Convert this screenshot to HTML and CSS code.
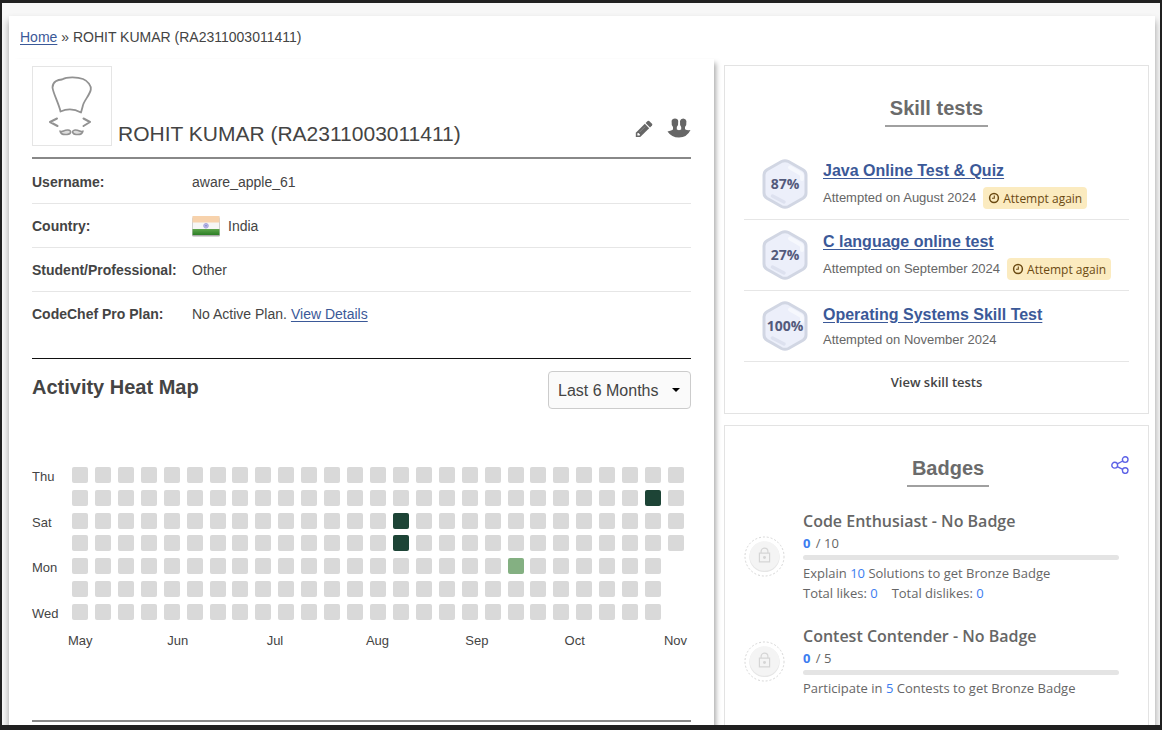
FILE: index.html
```html
<!DOCTYPE html>
<html lang="en">
<head>
<meta charset="utf-8">
<meta name="viewport" content="width=device-width, initial-scale=1">
<title>ROHIT KUMAR (RA2311003011411)</title>
<link rel="stylesheet" href="styles.css">
</head>
<body>
<svg width="0" height="0" class="defs" aria-hidden="true">
  <symbol id="hex" viewBox="0 0 46 50">
    <path d="M19.500 2.500Q23 .8 26.500 2.500L41 10.700Q44 12.500 44 16V34Q44 37.500 41 39.300L26.500 47.500Q23 49.200 19.500 47.500L5 39.300Q2 37.500 2 34V16Q2 12.500 5 10.700Z" fill="#eceffa" stroke="#d1d6e3" stroke-width="3"/>
    <path d="M28 8.500L38.500 14.500Q40 15.500 40 17V20" fill="none" stroke="#f6f8fd" stroke-width="4" stroke-linecap="round"/>
    <path d="M10.500 37L22 43" stroke="#dde1ef" stroke-width="3.500" stroke-linecap="round"/>
  </symbol>
  <symbol id="clock" viewBox="0 0 12 12">
    <circle cx="6" cy="6" r="4.400" fill="none" stroke="currentColor" stroke-width="1.500"/>
    <path d="M6.300 3.400V6.300H4" fill="none" stroke="currentColor" stroke-width="1.100"/>
  </symbol>
  <symbol id="lock" viewBox="0 0 42 42">
    <circle cx="21" cy="21" r="20" fill="none" stroke="#d4d4d4" stroke-width="1" stroke-dasharray="2 2"/>
    <circle cx="21" cy="21.500" r="15.500" fill="#e6e6e6"/>
    <circle cx="21" cy="20.500" r="15.200" fill="#f4f4f4"/>
    <path d="M17.500 17.500V16A3.500 3.500 0 0 1 24.500 16V17.500M15.800 17.500H26.200V26.500H15.800Z" fill="none" stroke="#d5d5d5" stroke-width="1.200"/>
    <circle cx="21" cy="22" r="1.500" fill="#d5d5d5"/>
  </symbol>
</svg>
<div class="viewport">
  <div class="page">
    <nav class="breadcrumb"><a href="#">Home</a> » ROHIT KUMAR (RA2311003011411)</nav>
    <div class="columns">
      <main class="profile">
        <header class="profile-head">
          <svg class="avatar" viewBox="0 0 78 78" role="img" aria-label="Chef avatar">
            <g fill="none" stroke="#929292" stroke-width="1.800" stroke-linecap="round" stroke-linejoin="round">
              <path d="M27.500 44.500C26 37 20 26 19.500 20.500C19.500 14.500 25 12.500 29 12.500C34 9.300 45 10 50 12C55 14 58.500 19 57.800 22.500C57 28 50.500 34 49.800 39L48 45.500C41 41.500 34 41.500 27.500 44.500Z"/>
              <path d="M24 51.500L17 55L24.500 59M50.500 51.500L57 55L50.500 59" stroke-width="2"/>
              <path d="M27 64C29 66 31 62.500 35 63C39 63.500 38.500 67 34 67.500C30 68 27.500 66.500 27 64ZM50 64C48 66 46 62.500 42 63C38.500 63.500 39 67 43 67.500C47 68 49.500 66.500 50 64Z" stroke-width="1.500" fill="#ddd"/>
            </g>
          </svg>
          <h1>ROHIT KUMAR (RA2311003011411)</h1>
          <a class="action" href="#" aria-label="Edit profile"><svg width="18" height="18" viewBox="0 0 18 18"><path d="M.8 17V12.700L9.800 3.800L14.200 8.200L5.200 17Z" fill="#666"/><path d="M10.600 3L12.600 1Q13.400.3 14.200 1L17 3.800Q17.700 4.600 17 5.400L15 7.400Z" fill="#666"/><path d="M2.400 13.300V15.600H4.600L5 14.500L3.500 13Z" fill="#fff"/><path d="M4.700 12L10 6.700" stroke="#999" stroke-width=".7"/></svg></a>
          <a class="action" href="#" aria-label="Teams"><svg width="24" height="20" viewBox="0 0 24 20"><path d="M.5 13.500Q5 12.500 6 11.500V9Q4.200 7 4.600 3Q5 .5 8 .5T11.200 3Q11.600 7 9.800 9V11.500L12 12.300L14.200 11.500V9Q12.600 7 13 3Q13.500.5 16.200.5T19.400 3Q19.800 7 18 9V11.200Q20 12.500 23.500 12Q20 19.500 12 19.500Q4.500 19.500.5 13.500Z" fill="#666"/></svg></a>
        </header>
        <dl class="details">
          <div class="detail"><dt>Username:</dt><dd>aware_apple_61</dd></div>
          <div class="detail"><dt>Country:</dt><dd><svg class="flag" width="28" height="22" viewBox="0 0 28 22" aria-hidden="true"><defs><linearGradient id="g" x2="0" y2="1"><stop stop-color="#5da64c"/><stop offset="1" stop-color="#2c7e25"/></linearGradient></defs><rect x="0" y="2" width="28" height="19.500" rx="1.500" fill="#aaa"/><rect x=".5" y="1" width="27" height="19" fill="#f6f6f6"/><path d="M.5 1H27.500V7.500H.5Z" fill="#f7d2ac"/><path d="M.5 14H27.500V20H.5Z" fill="url(#g)"/><circle cx="14" cy="10.800" r="2.300" fill="#b9b9e5" stroke="#a5a5dc" stroke-width="1"/><circle cx="14" cy="10.800" r=".8" fill="#7979c8"/></svg>India</dd></div>
          <div class="detail"><dt>Student/Professional:</dt><dd>Other</dd></div>
          <div class="detail"><dt>CodeChef Pro Plan:</dt><dd>No Active Plan. <a href="#">View Details</a></dd></div>
        </dl>
        <section class="activity">
          <div class="activity-head">
            <h2><label for="range">Activity Heat Map</label></h2>
            <div class="select-wrap">
              <select id="range"><option>Last 6 Months</option><option>Last 12 Months</option></select>
            </div>
          </div>
          <div class="heatmap">
            <div class="days"><span>Thu</span><span></span><span>Sat</span><span></span><span>Mon</span><span></span><span>Wed</span></div>
            <div class="cells" id="cells"></div>
            <div class="months"><span>May</span><span>Jun</span><span>Jul</span><span>Aug</span><span>Sep</span><span>Oct</span><span>Nov</span></div>
          </div>
        </section>
      </main>
      <aside class="side">
        <section class="panel skills">
          <h2 class="panel-title">Skill tests</h2>
          <ul class="tests">
            <li class="test"><div class="score"><svg><use href="#hex"/></svg><span>87%</span></div><div><a class="test-name" href="#">Java Online Test &amp; Quiz</a><div class="test-meta">Attempted on August 2024 <button type="button" class="again"><svg><use href="#clock"/></svg>Attempt again</button></div></div></li>
            <li class="test"><div class="score"><svg><use href="#hex"/></svg><span>27%</span></div><div><a class="test-name" href="#">C language online test</a><div class="test-meta">Attempted on September 2024 <button type="button" class="again"><svg><use href="#clock"/></svg>Attempt again</button></div></div></li>
            <li class="test"><div class="score"><svg><use href="#hex"/></svg><span>100%</span></div><div><a class="test-name" href="#">Operating Systems Skill Test</a><div class="test-meta plain">Attempted on November 2024</div></div></li>
          </ul>
          <a class="view-tests" href="#">View skill tests</a>
        </section>
        <section class="panel badges">
          <div class="badges-head">
            <h2 class="panel-title">Badges</h2>
            <button type="button" class="share" aria-label="Share badges"><svg width="18" height="18" viewBox="0 0 18 18"><g fill="none" stroke="#5d62e6" stroke-width="1.400"><circle cx="3.700" cy="9.200" r="2.900"/><circle cx="14.200" cy="3.600" r="2.800"/><circle cx="14.200" cy="14.600" r="2.800"/><path d="M6.300 7.800L11.700 5M6.300 10.600L11.700 13.300"/></g></svg></button>
          </div>
          <article class="badge"><svg class="lock" aria-hidden="true"><use href="#lock"/></svg>
            <div class="badge-body"><h3>Code Enthusiast - No Badge</h3><p class="progress-text"><b>0</b> / 10</p><div class="bar"></div><p>Explain <em>10</em> Solutions to get Bronze Badge</p><p class="totals"><span>Total likes: <em>0</em></span><span>Total dislikes: <em>0</em></span></p></div>
          </article>
          <article class="badge"><svg class="lock" aria-hidden="true"><use href="#lock"/></svg>
            <div class="badge-body"><h3>Contest Contender - No Badge</h3><p class="progress-text"><b>0</b> / 5</p><div class="bar"></div><p>Participate in <em>5</em> Contests to get Bronze Badge</p></div>
          </article>
        </section>
      </aside>
    </div>
  </div>
</div>
<script src="heatmap.js"></script>
</body>
</html>
```
FILE: styles.css
```css
* { box-sizing: border-box; }
body {
  margin: 0;
  height: 100vh;
  padding: 3px 2px 5px;
  background: #202020;
  color: #444;
  font: 13px/20px "Liberation Sans", Arial, sans-serif;
}
h1, h2, h3, p, ul, dl, dd { margin: 0; padding: 0; }
button { border: 0; padding: 0; background: none; cursor: pointer; }
a { color: #3b5998; text-underline-offset: 2px; }
svg { display: block; flex: none; }
.defs { position: absolute; }
.viewport {
  height: 100%;
  overflow: hidden;
  background: #f7f7f7;
  padding: 13px 5px 0 7px;
}
.page {
  min-height: 100%;
  background: #fff;
  padding: 0 6px;
  box-shadow: 0 5px 7px #999;
}
.breadcrumb {
  padding: 11px 5px 12px;
  font-size: 14px;
}
.columns { display: flex; gap: 10px; }
.profile {
  flex: 1;
  padding: 7px 23px 0 17px;
  height: 800px;
  box-shadow: 2px 4px 5px #aaa;
  clip-path: inset(-1px -8px 0 0);
}
.profile-head {
  display: flex;
  align-items: flex-end;
  gap: 14px;
  padding-bottom: 11px;
  border-bottom: 2px solid #888;
}
.avatar { width: 80px; height: 80px; border: 1px solid #e5e5e5; margin-right: -8px; }
.profile-head h1 { flex: 1; font-size: 21px; font-weight: 400; line-height: 24px; }
.action { padding-bottom: 8px; }
.details { padding-top: 1px; font-size: 14px; }
.detail {
  display: flex;
  align-items: center;
  height: 44px;
  border-bottom: 1px solid #e6e6e6;
}
.detail:last-child { border: 0; }
.detail dt { width: 160px; font-weight: 700; }
.detail dd { display: flex; align-items: center; gap: 4px; }
.flag { margin-right: 4px; }
.activity {
  height: 364px;
  margin-top: 22px;
  padding-top: 12px;
  border-top: 1px solid #111;
  border-bottom: 2px solid #888;
}
.activity-head { display: flex; justify-content: space-between; }
.activity-head h2 { font-size: 20px; line-height: 32px; }
.select-wrap { position: relative; }
.select-wrap select {
  appearance: none;
  height: 38px;
  width: 143px;
  padding: 0 9px;
  border: 1px solid #ccc;
  border-radius: 4px;
  background: #fafafa;
  color: #444;
  font: 16px "Liberation Sans", Arial, sans-serif;
}
.select-wrap::after {
  content: "";
  position: absolute;
  right: 11px;
  top: 17px;
  border: 4px solid transparent;
  border-top: 4px solid #000;
  border-bottom: 0;
  pointer-events: none;
}
.heatmap {
  display: grid;
  grid-template-columns: 40px 1fr;
  margin: 58px 7px 0 0;
}
.days, .cells {
  display: grid;
  grid-template-rows: repeat(7, 16px);
  align-content: space-between;
  height: 153px;
}
.days { line-height: 20px; }
.cells {
  grid-template-columns: repeat(27, 16px);
  justify-content: space-between;
}
.cell { background: #d9d9d9; border-radius: 2px; }
.cell.high { background: #1d4436; }
.cell.mid { background: #84b082; }
.cell.none { visibility: hidden; }
.months {
  grid-column: 1 / -1;
  display: grid;
  grid-template-columns: repeat(6, 1fr) auto;
  margin: 11px -3px 0 36px;
}
.side { width: 425px; padding-top: 6px; }
.panel { border: 1px solid #e3e3e3; padding: 0 19px; }
.skills { height: 349px; margin-bottom: 11px; padding-top: 30px; }
.panel-title {
  width: max-content;
  margin: 0 auto;
  padding: 0 5px 5px;
  border-bottom: 2px solid #a0a0a0;
  color: #6b6b6b;
  font-size: 20px;
  line-height: 24px;
}
.tests { list-style: none; margin-top: 22px; }
.test {
  display: flex;
  align-items: center;
  gap: 15px;
  height: 71px;
  padding-left: 18px;
  border-bottom: 1px solid #e6e6e6;
}
.score { position: relative; width: 46px; height: 50px; }
.score svg { width: 46px; height: 50px; }
.score span {
  position: absolute;
  inset: 0;
  display: grid;
  place-items: center;
  color: #535a7c;
  font: 700 14px/20px "Open Sans", sans-serif;
  padding-bottom: 1px;
}
.test-name { display: block; font-size: 16px; font-weight: 700; line-height: 24px; }
.test-meta { display: flex; align-items: center; gap: 7px; margin-top: 4px; color: #666; }
.test-meta.plain { margin-top: 3px; }
.again {
  display: flex;
  align-items: center;
  gap: 3px;
  height: 22px;
  padding: 0 5px;
  border-radius: 4px;
  background: #fbebc0;
  color: #6b4a12;
  font: 12px "Open Sans", sans-serif;
}
.again svg { width: 12px; height: 12px; }
.view-tests {
  display: block;
  margin-top: 10px;
  color: #444;
  text-align: center;
  text-decoration: none;
  font: 600 13px/20px "Open Sans", sans-serif;
}
.badges { height: 420px; padding-top: 30px; color: #666; font-family: "Open Sans", sans-serif; }
.badges-head { display: flex; align-items: flex-start; padding-left: 41px; }
.badges-head .panel-title { font-family: "Liberation Sans", Arial, sans-serif; }
.badge { display: flex; align-items: center; gap: 18px; margin-top: 21px; }
.badges-head + .badge { margin-top: 22px; }
.lock { width: 41px; height: 41px; }
.badge-body { flex: 1; padding-right: 10px; }
.badge h3 { font-size: 16px; font-weight: 600; line-height: 24px; }
.badge b, .badge em { color: #3c7df0; font-style: normal; }
.progress-text b { margin-right: 2px; }
.bar { height: 5px; margin: 2px 0 3px; border-radius: 3px; background: #e4e4e4; }
.totals { display: flex; gap: 14px; }
```
FILE: heatmap.js
```js
const WEEKS = 27;
const levels = { "1-25": "high", "2-14": "high", "3-14": "high", "4-19": "mid" };
const cells = document.getElementById("cells");
for (let day = 0; day < 7; day++) {
  for (let week = 0; week < WEEKS; week++) {
    const cell = document.createElement("span");
    const future = week === WEEKS - 1 && day > 3;
    cell.className = "cell " + (future ? "none" : levels[day + "-" + week] || "");
    cells.append(cell);
  }
}
```
